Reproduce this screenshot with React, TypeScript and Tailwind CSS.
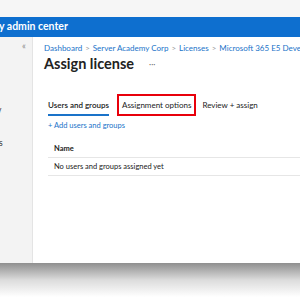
const tabs = ['Users and groups', 'Assignment options', 'Review + assign'];

const App = () => {
  return (
    <div className="h-[300px] w-[300px] overflow-hidden bg-white font-['Lato',sans-serif]">
      <div className="h-[17px] bg-[#f6f6f6]" />
      <div className="flex h-[20px] items-center bg-[#0e6fcf] text-[10.5px] font-bold text-white whitespace-nowrap">
        <span className="-ml-[1px]">y admin center</span>
      </div>
      <div className="flex h-[226px]">
        <div className="relative w-[33px] shrink-0 border-r border-[#e4e4e4] bg-[#f3f3f3]">
          <div className="absolute left-[22px] top-[2px] text-[9px] text-[#888]">«</div>
          <div className="absolute left-[-3px] top-[67px] text-[8.5px] text-[#333]">v</div>
          <div className="absolute left-[-1px] top-[100px] text-[8.5px] text-[#333]">s</div>
        </div>
        <div className="min-w-0 flex-1 pl-[11px] pt-[5px]">
          <div className="flex items-center gap-[3px] whitespace-nowrap text-[8px] text-[#1a73c9]">
            <span>Dashboard</span>
            <span className="text-[#999]">&gt;</span>
            <span>Server Academy Corp</span>
            <span className="text-[#999]">&gt;</span>
            <span>Licenses</span>
            <span className="text-[#999]">&gt;</span>
            <span>Microsoft 365 E5 Developer</span>
          </div>
          <div className="-mt-[1px] flex items-center gap-[15px] whitespace-nowrap">
            <span className="text-[14.5px] font-bold text-[#222]">Assign license</span>
            <span className="text-[8px] text-[#666]">···</span>
          </div>
          <div className="mt-[19px] flex items-center pl-[4px] text-[8px] text-[#222] whitespace-nowrap">
            <div className="border-b-2 border-[#1a73c9] pb-[3px] pt-[5px] font-semibold">{tabs[0]}</div>
            <div className="ml-[8px] border-2 border-[#e8000b] px-[3px] py-[3px]">{tabs[1]}</div>
            <div className="ml-[6px]">{tabs[2]}</div>
          </div>
          <div className="mt-[4px] pl-[4px] text-[7.5px] text-[#1a73c9] whitespace-nowrap">+ Add users and groups</div>
          <div className="ml-[4px] mt-[12px] text-[7.5px] leading-[11px] text-[#222] whitespace-nowrap">
            <div className="pb-[3px] pl-[6px] font-bold">Name</div>
            <div className="border-y border-[#e6e6e6] py-[3px] pl-[6px]">No users and groups assigned yet</div>
          </div>
        </div>
      </div>
      <div className="h-[34px] bg-gradient-to-b from-[#8f8f8f] via-[#dcdcdc] to-white" />
    </div>
  );
};

export default App;
